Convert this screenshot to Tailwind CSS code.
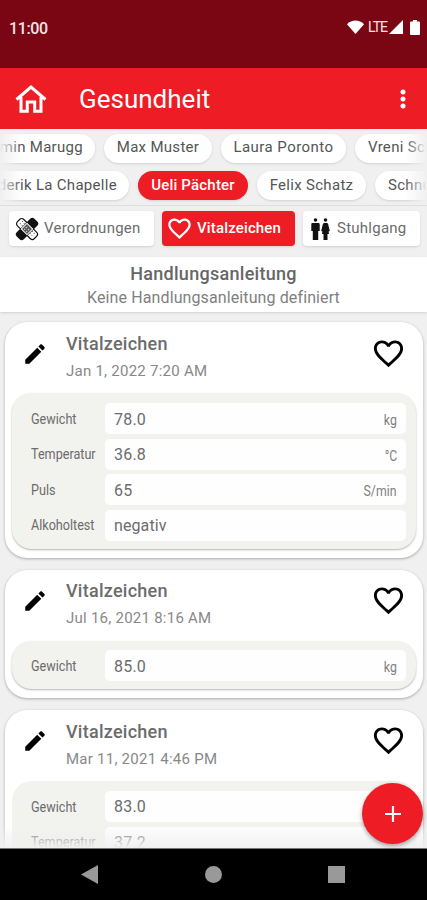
<!DOCTYPE html>
<html lang="de">
<head>
<meta charset="utf-8">
<title>Gesundheit</title>
<script src="https://cdn.jsdelivr.net/npm/@tailwindcss/browser@4"></script>
</head>
<body class="w-[427px] h-[900px] overflow-hidden bg-[#f0f0f0] font-['Roboto',sans-serif] text-[#6c6c6c] whitespace-nowrap">
<svg class="hidden">
  <symbol id="heart" viewBox="0 0 24 24"><path fill="currentColor" d="M16.5 3c-1.74 0-3.41.81-4.5 2.09C10.91 3.81 9.24 3 7.5 3 4.42 3 2 5.42 2 8.5c0 3.78 3.4 6.86 8.55 11.54L12 21.35l1.45-1.32C18.6 15.36 22 12.28 22 8.5 22 5.42 19.58 3 16.5 3zm-4.4 15.55l-.1.1-.1-.1C7.14 14.24 4 11.39 4 8.5 4 6.5 5.5 5 7.5 5c1.54 0 3.04.99 3.57 2.36h1.87C13.46 5.99 14.96 5 16.5 5c2 0 3.5 1.5 3.5 3.5 0 2.89-3.14 5.74-7.9 10.05z"/></symbol>
  <symbol id="pencil" viewBox="0 0 24 24"><path fill="currentColor" d="M3 17.25V21h3.75L17.81 9.94l-3.75-3.75L3 17.25zM20.71 7.04c.39-.39.39-1.02 0-1.41l-2.34-2.34c-.39-.39-1.02-.39-1.41 0l-1.83 1.83 3.75 3.75 1.83-1.83z"/></symbol>
</svg>
<div class="relative flex flex-col h-[900px]">
  <header class="shrink-0">
    <div class="h-[68px] bg-[#7a0613] text-[#f6e4e4] flex items-start pt-[18px] pl-[9px] pr-[7px]">
      <span class="text-[16px] leading-[21px] font-medium tracking-[-0.4px]">11:00</span>
      <div class="ml-auto flex items-center h-[18px]">
        <svg class="w-[17px] h-[14px]" viewBox="0 0 17 14"><path fill="#fff" d="M0 4.200C4.800-.8 12.200-.8 17 4.200L8.500 14z"/></svg>
        <span class="ml-[4px] text-[14px] w-[21px] tracking-[-1px] leading-4">LTE</span>
        <svg class="w-[14px] h-[14px]" viewBox="0 0 14 14"><path fill="#fff" d="M14 0v14H0z"/></svg>
        <svg class="w-[10px] h-[15px] ml-[7px]" viewBox="0 0 10 15"><path fill="#fff" d="M3 0h4v1.500h2q1 0 1 1V14q0 1-1 1H1q-1 0-1-1V2.500q0-1 1-1h2z"/></svg>
      </div>
    </div>
    <div class="h-[61px] bg-[#ee1c25] text-white flex items-center pl-[15px] pr-[20px]">
      <svg class="w-[32px] h-[28px]" viewBox="0 0 32 28" fill="none" stroke="#fff" stroke-width="3"><path d="M1.500 14.500L16 2l14.500 12.500M6 12v14.200h6.300V17h7.400v9.200H26V12"/></svg>
      <h1 class="ml-[32px] mt-[2px] text-[26px]">Gesundheit</h1>
      <svg class="ml-auto w-[8px] h-[20px]" viewBox="0 0 8 20" fill="#fff"><circle cx="4" cy="3" r="2.500"/><circle cx="4" cy="10" r="2.500"/><circle cx="4" cy="17" r="2.500"/></svg>
    </div>
  </header>

  <section class="relative shrink-0 h-[77px] overflow-hidden border-b border-[#dedede] text-[15px] tracking-[0.3px] text-[#555]">
    <div class="flex gap-[9px] pt-[5px] h-[42px] -ml-[40px]">
      <span class="w-[135px] h-[29px] shrink-0 rounded-full bg-white shadow-sm flex items-center justify-end pr-[12px] pb-[2px]">Jasmin Marugg</span>
      <span class="w-[108px] h-[29px] shrink-0 rounded-full bg-white shadow-sm flex items-center justify-center pb-[2px]">Max Muster</span>
      <span class="w-[125px] h-[29px] shrink-0 rounded-full bg-white shadow-sm flex items-center justify-center pb-[2px] tracking-[0.45px]">Laura Poronto</span>
      <span class="w-[130px] h-[29px] shrink-0 rounded-full bg-white shadow-sm flex items-center pl-[13px] pb-[2px]">Vreni Schmid</span>
    </div>
    <div class="flex gap-[9px] -ml-[40px]">
      <span class="w-[169px] h-[29px] shrink-0 rounded-full bg-white shadow-sm flex items-center justify-end pr-[12px]">Frederik La Chapelle</span>
      <span class="w-[110px] h-[29px] shrink-0 rounded-full bg-[#ee1c25] text-white font-medium tracking-[0.2px] shadow-sm flex items-center justify-center">Ueli Pächter</span>
      <span class="w-[109px] h-[29px] shrink-0 rounded-full bg-white shadow-sm flex items-center justify-center">Felix Schatz</span>
      <span class="w-[130px] h-[29px] shrink-0 rounded-full bg-white shadow-sm flex items-center pl-[13px]">Schnurrli</span>
    </div>
    <div class="absolute inset-y-0 left-0 w-[22px] bg-linear-to-r from-[#f0f0f0] to-[#f0f0f0]/0"></div>
    <div class="absolute inset-y-0 right-0 w-[22px] bg-linear-to-l from-[#f0f0f0] to-[#f0f0f0]/0"></div>
  </section>

  <nav class="shrink-0 flex gap-[8px] h-[51px] pt-[5px] pl-[9px] text-[15px] tracking-[0.25px]">
    <div class="w-[145px] h-[35px] rounded-[4px] bg-white shadow-sm flex items-center pl-[6px]">
      <svg class="w-[24px] h-[24px]" viewBox="0 0 24 24"><g transform="rotate(45 12 12)"><rect x="0" y="7.500" width="24" height="9" rx="3" fill="#fff" stroke="#111" stroke-width="1.200"/><path stroke="#555" stroke-dasharray="1 1.500" d="M3 10h4M3 13h4M17 10h4M17 13h4"/></g><g transform="rotate(-45 12 12)"><rect x="-.5" y="7" width="25" height="10" rx="3" fill="#111"/><rect x="8" y="8" width="8" height="8" fill="#555" stroke="#fff"/><path stroke="#ddd" stroke-width="1.200" stroke-dasharray="1.200 1.200" d="M9.500 10.500h5M9.500 13.500h5"/></g></svg>
      <span class="ml-[5px] pb-[1px]">Verordnungen</span>
    </div>
    <div class="w-[133px] h-[35px] rounded-[4px] bg-[#ee1c25] text-white shadow-sm flex items-center pl-[4px]">
      <svg class="w-[27px] h-[27px]"><use href="#heart"/></svg>
      <span class="ml-[4px] pb-[1px] font-medium tracking-[0.15px]">Vitalzeichen</span>
    </div>
    <div class="w-[117px] h-[35px] rounded-[4px] bg-white shadow-sm flex items-center pl-[8px]">
      <svg class="w-[19px] h-[22px]" viewBox="0 0 19 22" fill="#111"><circle cx="4.500" cy="2" r="1.800"/><path d="M1.500 5h6q1.200 0 1.200 1.200V13H7.200v9H1.800v-9H.3V6.200Q.3 5 1.500 5z"/><circle cx="14.500" cy="2" r="1.800"/><path d="M13.200 5h2.600q1 0 1.300 1l1.700 7-1.200.4L18 16h-1.500v6h-4v-6H11l.4-2.600-1.200-.4 1.700-7q.3-1 1.300-1z"/></svg>
      <span class="ml-[7px] pb-[1px]">Stuhlgang</span>
    </div>
  </nav>

  <section class="shrink-0 h-[55px] bg-white shadow-sm text-center pt-[5px]">
    <h2 class="text-[18px] leading-6 font-medium tracking-[0.28px] text-[#666]">Handlungsanleitung</h2>
    <p class="text-[16px] leading-[23px] tracking-[0.11px] text-[#808080]">Keine Handlungsanleitung definiert</p>
  </section>

  <main class="flex-1 min-h-0 overflow-hidden pt-[10px] pl-[5px] pr-[4px] flex flex-col gap-[12px]">
    <article class="shrink-0 h-[236px] rounded-[22px] bg-white shadow-[0_1px_3px_rgba(0,0,0,0.3)] px-[7px]">
      <div class="h-[71px] flex pl-[10px] pr-[10px]">
        <svg class="w-[26px] h-[26px] mt-[19px] text-black"><use href="#pencil"/></svg>
        <div class="ml-[18px] pt-[9px]">
          <h3 class="text-[18px] leading-[26px] font-medium tracking-[0.25px]">Vitalzeichen</h3>
          <p class="text-[15px] leading-[28px] tracking-[0.25px] text-[#888]">Jan 1, 2022 7:20 AM</p>
        </div>
        <svg class="w-[35px] h-[35px] ml-auto mt-[14px] text-black"><use href="#heart"/></svg>
      </div>
      <div class="h-[156px] rounded-[20px] bg-[#f2f2ee] shadow-[0_1px_2px_rgba(0,0,0,0.3)] pt-[10px] pl-[19px] pr-[10px] flex flex-col gap-[4.500px] text-[14px]">
        <div class="flex h-[31px] items-center"><span class="w-[74px] pt-[1px]"><span class="inline-block origin-left scale-x-[0.9]">Gewicht</span></span><div class="flex-1 h-full rounded-[5px] bg-[#fefefe] flex items-center justify-between px-[9px]"><span class="text-[16px] tracking-[0.2px] pt-[2px]">78.0</span><span class="inline-block origin-right scale-x-[0.88] pt-[4px] text-[#808080]">kg</span></div></div>
        <div class="flex h-[31px] items-center"><span class="w-[74px] pt-[1px]"><span class="inline-block origin-left scale-x-[0.9]">Temperatur</span></span><div class="flex-1 h-full rounded-[5px] bg-[#fefefe] flex items-center justify-between px-[9px]"><span class="text-[16px] tracking-[0.2px] pt-[2px]">36.8</span><span class="inline-block origin-right scale-x-[0.88] pt-[4px] text-[#808080]">°C</span></div></div>
        <div class="flex h-[31px] items-center"><span class="w-[74px] pt-[1px]"><span class="inline-block origin-left scale-x-[0.9]">Puls</span></span><div class="flex-1 h-full rounded-[5px] bg-[#fefefe] flex items-center justify-between px-[9px]"><span class="text-[16px] tracking-[0.2px] pt-[2px]">65</span><span class="inline-block origin-right scale-x-[0.88] pt-[4px] text-[#808080]">S/min</span></div></div>
        <div class="flex h-[31px] items-center"><span class="w-[74px] pt-[1px]"><span class="inline-block origin-left scale-x-[0.9]">Alkoholtest</span></span><div class="flex-1 h-full rounded-[5px] bg-[#fefefe] flex items-center px-[9px]"><span class="text-[16px] tracking-[0.1px] pt-[2px]">negativ</span></div></div>
      </div>
    </article>

    <article class="shrink-0 h-[128px] rounded-[22px] bg-white shadow-[0_1px_3px_rgba(0,0,0,0.3)] px-[7px]">
      <div class="h-[71px] flex pl-[10px] pr-[10px]">
        <svg class="w-[26px] h-[26px] mt-[18px] text-black"><use href="#pencil"/></svg>
        <div class="ml-[18px] pt-[8px]">
          <h3 class="text-[18px] leading-[26px] font-medium tracking-[0.25px]">Vitalzeichen</h3>
          <p class="text-[15px] leading-[28px] tracking-[0.25px] text-[#888]">Jul 16, 2021 8:16 AM</p>
        </div>
        <svg class="w-[35px] h-[35px] ml-auto mt-[13px] text-black"><use href="#heart"/></svg>
      </div>
      <div class="h-[48px] rounded-[20px] bg-[#f2f2ee] shadow-[0_1px_2px_rgba(0,0,0,0.3)] pt-[9px] pl-[19px] pr-[10px] text-[14px]">
        <div class="flex h-[31px] items-center"><span class="w-[74px] pt-[2px]"><span class="inline-block origin-left scale-x-[0.9]">Gewicht</span></span><div class="flex-1 h-full rounded-[5px] bg-[#fefefe] flex items-center justify-between px-[9px]"><span class="text-[16px] tracking-[0.2px] pt-[2px]">85.0</span><span class="inline-block origin-right scale-x-[0.88] pt-[4px] text-[#808080]">kg</span></div></div>
      </div>
    </article>

    <article class="shrink-0 h-[236px] rounded-[22px] bg-white shadow-[0_1px_3px_rgba(0,0,0,0.3)] px-[7px]">
      <div class="h-[71px] flex pl-[10px] pr-[10px]">
        <svg class="w-[26px] h-[26px] mt-[18px] text-black"><use href="#pencil"/></svg>
        <div class="ml-[18px] pt-[9px]">
          <h3 class="text-[18px] leading-[26px] font-medium tracking-[0.25px]">Vitalzeichen</h3>
          <p class="text-[15px] leading-[28px] tracking-[0.25px] text-[#888]">Mar 11, 2021 4:46 PM</p>
        </div>
        <svg class="w-[35px] h-[35px] ml-auto mt-[13px] text-black"><use href="#heart"/></svg>
      </div>
      <div class="h-[156px] rounded-[20px] bg-[#f2f2ee] pt-[10px] pl-[19px] pr-[10px] flex flex-col gap-[4.500px] text-[14px]">
        <div class="flex h-[31px] items-center"><span class="w-[74px] pt-[1px]"><span class="inline-block origin-left scale-x-[0.9]">Gewicht</span></span><div class="flex-1 h-full rounded-[5px] bg-[#fefefe] flex items-center px-[9px]"><span class="text-[16px] tracking-[0.2px] pt-[1px]">83.0</span></div></div>
        <div class="flex h-[31px] items-center"><span class="w-[74px] pt-[1px]"><span class="inline-block origin-left scale-x-[0.9]">Temperatur</span></span><div class="flex-1 h-full rounded-[5px] bg-[#fefefe] flex items-center px-[9px]"><span class="text-[16px] tracking-[0.2px] pt-[1px]">37.2</span></div></div>
      </div>
    </article>
  </main>

  <div class="absolute left-0 bottom-[52px] w-full h-[22px] bg-linear-to-t from-[#f0f0f0] to-[#f0f0f0]/0"></div>
  <button class="absolute left-[362px] top-[783px] size-[61px] rounded-full bg-[#ee1c25] shadow-[0_2px_4px_rgba(0,0,0,0.35)] flex items-center justify-center">
    <svg class="size-[16px]" viewBox="0 0 16 16" stroke="#fff" stroke-width="2.200"><path d="M8 0v16M0 8h16"/></svg>
  </button>

  <footer class="shrink-0 h-[52px] bg-black border-t border-[#777] flex items-center pl-[81px]">
    <svg class="w-[17px] h-[19px]" viewBox="0 0 17 19"><path fill="#999" d="M17 0v19L0 9.500z"/></svg>
    <div class="ml-[107px] size-[17px] rounded-full bg-[#999]"></div>
    <div class="ml-[106px] size-[17px] bg-[#999]"></div>
  </footer>
</div>
</body>
</html>
